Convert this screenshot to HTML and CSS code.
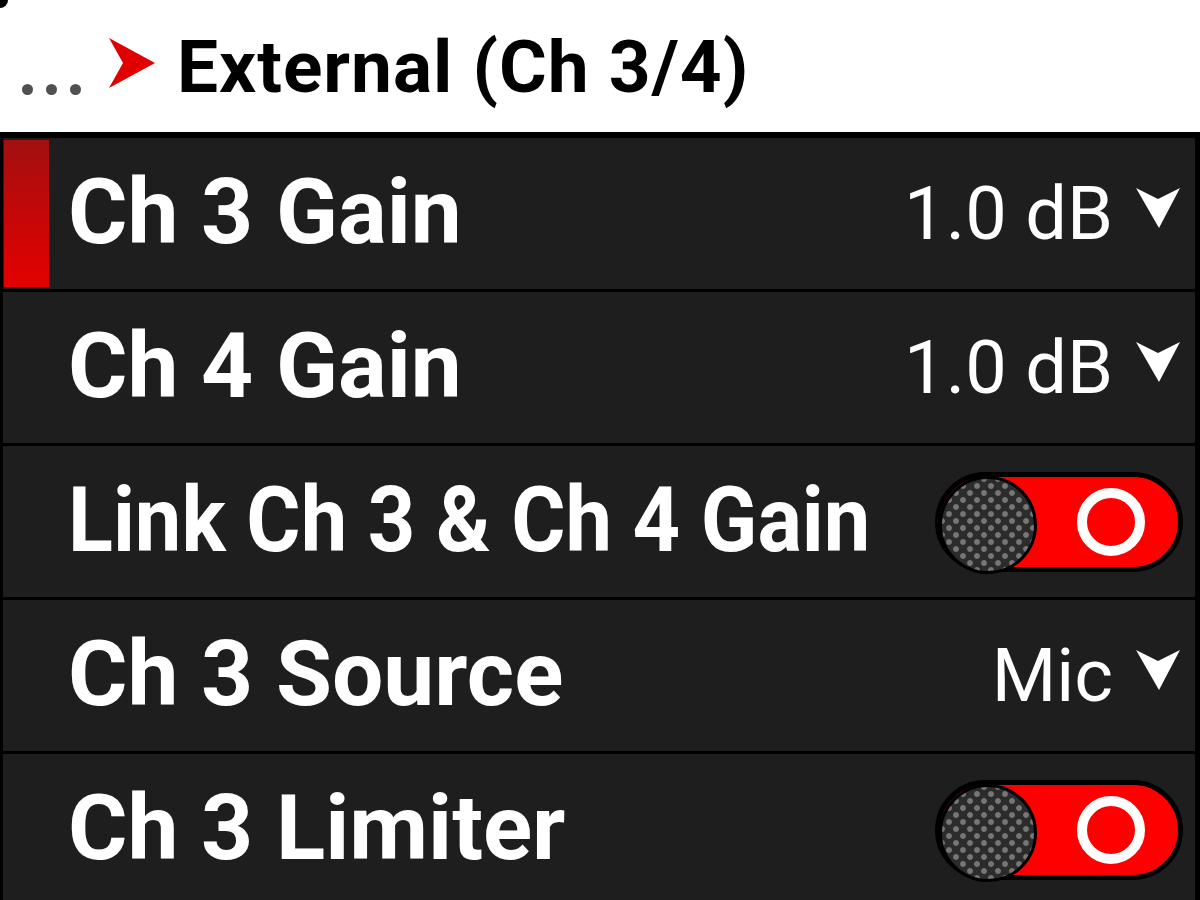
FILE: index.html
```html
<!DOCTYPE html>
<html>
<head>
<meta charset="utf-8">
<link rel="stylesheet" href="styles.css">
</head>
<body>
<div class="screen">
  <div class="corner"></div>
  <header class="crumb">
    <span class="dots"><i></i><i></i><i></i></span>
    <svg class="crumb-arrow" width="50" height="52" viewBox="0 0 50 52"><path d="M2 1 L48 26 L2 51 L16 26 Z" fill="#e00000"/></svg>
    <h1 class="title">External (Ch 3/4)</h1>
  </header>
  <div class="list">
    <div class="row selected">
      <span class="sel-bar"></span>
      <span class="label">Ch 3 Gain</span>
      <span class="value">1.0 dB<svg class="chev" width="46" height="44" viewBox="0 0 46 44"><path d="M1 2 L23 13 L45 2 L24 42 Z" fill="#fff"/></svg></span>
    </div>
    <div class="row">
      <span class="label">Ch 4 Gain</span>
      <span class="value">1.0 dB<svg class="chev" width="46" height="44" viewBox="0 0 46 44"><path d="M1 2 L23 13 L45 2 L24 42 Z" fill="#fff"/></svg></span>
    </div>
    <div class="row">
      <span class="label fit">Link Ch 3 &amp; Ch 4 Gain</span>
      <span class="toggle"><span class="knob"></span><span class="ring"></span></span>
    </div>
    <div class="row">
      <span class="label">Ch 3 Source</span>
      <span class="value">Mic<svg class="chev" width="46" height="44" viewBox="0 0 46 44"><path d="M1 2 L23 13 L45 2 L24 42 Z" fill="#fff"/></svg></span>
    </div>
    <div class="row">
      <span class="label">Ch 3 Limiter</span>
      <span class="toggle"><span class="knob"></span><span class="ring"></span></span>
    </div>
  </div>
</div>
</body>
</html>
```
FILE: styles.css
```css
html, body {
  margin: 0;
  padding: 0;
  background: #000;
}
.screen {
  width: 1200px;
  height: 900px;
  overflow: hidden;
  position: relative;
  font-family: Roboto, "Liberation Sans", sans-serif;
  background: #000;
}
.corner {
  position: absolute;
  left: -8px;
  top: -8px;
  width: 16px;
  height: 16px;
  border-radius: 50%;
  background: #000;
}
.crumb {
  height: 132px;
  background: #fff;
  display: flex;
  align-items: center;
  box-sizing: border-box;
  padding-left: 22px;
}
.dots {
  display: flex;
  gap: 13px;
  margin-top: 46px;
}
.dots i {
  display: block;
  width: 11px;
  height: 11px;
  border-radius: 50%;
  background: #505050;
}
.crumb-arrow {
  margin-left: 26px;
  margin-top: -6px;
}
.title {
  margin: 0 0 0 20px;
  font-size: 73px;
  font-weight: 700;
  color: #000;
  letter-spacing: 1px;
  line-height: 1;
  padding-top: 2px;
}
.list {
  display: flex;
  flex-direction: column;
  gap: 3px;
  padding: 6px 5px 0 3px;
}
.row {
  position: relative;
  height: 151px;
  flex: none;
  background: #1e1e1e;
  display: flex;
  align-items: center;
  justify-content: space-between;
  padding: 0 14px 0 65px;
  box-sizing: border-box;
}
.sel-bar {
  position: absolute;
  left: 1px;
  top: 2px;
  bottom: 2px;
  width: 45px;
  background: linear-gradient(#a30f0f, #e40000);
}
.label {
  color: #fff;
  font-weight: 700;
  font-size: 91px;
  line-height: 1;
  white-space: nowrap;
  margin-top: -2px;
}
.label.fit {
  flex: none;
  width: 800px;
  transform: scaleX(0.912);
  transform-origin: left center;
}
.value {
  color: #fff;
  font-weight: 400;
  font-size: 74px;
  line-height: 1;
  display: flex;
  align-items: center;
  gap: 22px;
}
.chev {
  margin-top: -12px;
}
.toggle {
  position: relative;
  width: 248px;
  height: 100px;
  box-sizing: border-box;
  border: 5px solid #000;
  border-radius: 50px;
  background: #ff0000;
  margin-right: -2px;
  flex: none;
}
.knob {
  position: absolute;
  left: -1px;
  top: -1px;
  width: 92px;
  height: 92px;
  border-radius: 50%;
  border: 3px solid #000;
  background-color: #2c2c2c;
  background-image:
    radial-gradient(circle, #767676 2.4px, transparent 3.4px),
    radial-gradient(circle, #767676 2.4px, transparent 3.4px);
  background-size: 14px 14px;
  background-position: 0 0, 7px 7px;
}
.ring {
  position: absolute;
  right: 33px;
  top: 11px;
  width: 68px;
  height: 68px;
  box-sizing: border-box;
  border-radius: 50%;
  border: 10px solid #fff;
}
```
